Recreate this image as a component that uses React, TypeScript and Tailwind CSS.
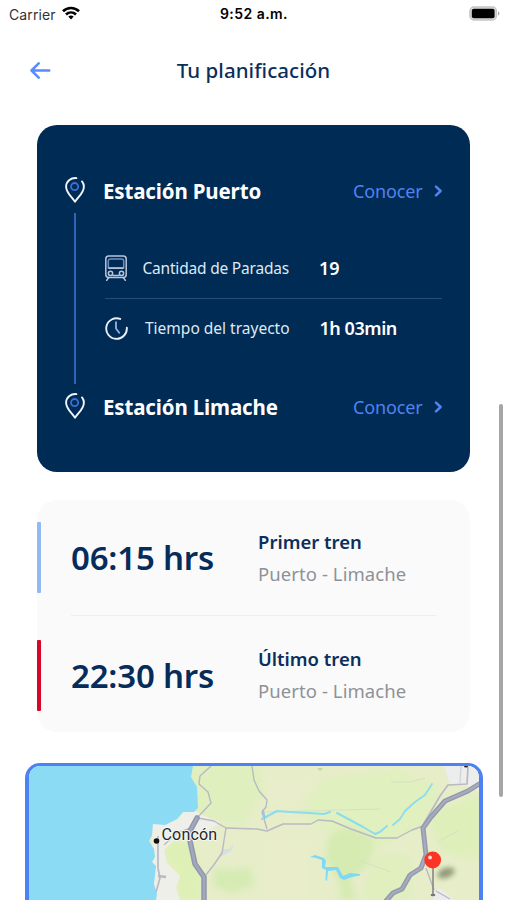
import React from 'react';

interface Departure {
  time: string;
  label: string;
  route: string;
  accent: string;
}

const departures: Departure[] = [
  { time: '06:15 hrs', label: 'Primer tren', route: 'Puerto - Limache', accent: 'bg-[#93b9f5]' },
  { time: '22:30 hrs', label: 'Último tren', route: 'Puerto - Limache', accent: 'bg-[#d9062a]' },
];

const PinIcon: React.FC = () => (
  <svg width="20" height="26" viewBox="0 0 20 26" fill="none" className="mb-[3px] shrink-0">
    <path
      d="M11.400 1.100C5.600.6 1.100 4.500 1.100 9.700c0 5.600 4.400 8.800 8.900 15 4.500-6.200 8.900-9.400 8.900-15 0-2-.6-3.700-1.900-5.300"
      stroke="#f1f5fb"
      strokeWidth="1.900"
      strokeLinecap="round"
      strokeLinejoin="round"
    />
    <circle cx="9.600" cy="9.600" r="3.600" stroke="#3a6fd4" strokeWidth="1.800" />
  </svg>
);

const TrainIcon: React.FC = () => (
  <svg width="22" height="26" viewBox="0 0 22 26" fill="none" stroke="#b9c6da" strokeWidth="1.500" className="-ml-[0.5px] mb-px shrink-0">
    <rect x=".8" y="1" width="20.400" height="21.600" rx="3" />
    <path d="M3.300 12.800V6.200c0-1.400.8-2.200 2.200-2.200h11c1.400 0 2.200.8 2.200 2.200v6.600z" stroke="#6a8fcb" />
    <path d="M3.300 13.200h15.400" />
    <circle cx="5.500" cy="18.400" r="2.100" />
    <circle cx="16.500" cy="18.400" r="2.100" />
    <path d="M8 20.500h6M3.500 22.800l-1.800 2.600M18.500 22.800l1.800 2.600" strokeLinecap="round" />
  </svg>
);

const ClockIcon: React.FC = () => (
  <svg width="23" height="23" viewBox="0 0 23 23" fill="none" strokeLinecap="round" className="-ml-[0.5px] shrink-0">
    <path d="M15.200 1.900A10.300 10.300 0 1 0 21.800 10.700" stroke="#e8eff9" strokeWidth="1.900" />
    <path d="M11 5.200v6.300l3.200 4.300" stroke="#8aabe4" strokeWidth="1.900" strokeLinejoin="round" />
  </svg>
);

const StationRow: React.FC<{ name: string }> = ({ name }) => (
  <div className="flex h-[42px] items-center">
    <PinIcon />
    <h2 className="ml-[18px] flex-1 whitespace-nowrap text-[20.5px] font-bold tracking-[-0.15px]">{name}</h2>
    <button className="-mr-px flex items-center text-[18px] text-[#5282f0]">
      <span className="w-[70px] whitespace-nowrap text-left tracking-[-0.15px]">Conocer</span>
      <svg width="9" height="12" viewBox="0 0 9 12" fill="none" className="ml-[11px]">
        <path d="M2 1.600L6.600 6 2 10.400" stroke="currentColor" strokeWidth="2.500" strokeLinecap="round" strokeLinejoin="round" />
      </svg>
    </button>
  </div>
);

const StatusBar: React.FC = () => (
  <div className="grid h-[28px] grid-cols-3 items-center pl-[9px] pr-[7px] font-['Inter',sans-serif] text-black">
    <div className="flex items-center gap-[6px] text-[14px] text-[#333]">
      <span className="tracking-[0.1px]">Carrier</span>
      <svg width="18" height="14" viewBox="0 0 18 14" fill="none" stroke="#000" strokeWidth="2.700" className="mb-[2px]">
        <path d="M1 5.300C5.600.9 12.400.9 17 5.300" />
        <path d="M4 8.500c2.900-2.700 7.100-2.700 10 0" />
        <path d="M6.300 10.500c1.600-1.300 3.800-1.300 5.400 0L9 13.400z" fill="#000" stroke="none" />
      </svg>
    </div>
    <span className="-mt-px -ml-px whitespace-nowrap text-center text-[14px] font-semibold tracking-[0.45px]">9:52 a.m.</span>
    <div className="flex justify-end">
      <svg width="31" height="15" viewBox="0 0 31 15" className="mb-[2px]">
        <rect x="1" y="1" width="26.400" height="13" rx="4" fill="#ddd" stroke="#c4c4c4" strokeWidth="1.500" />
        <rect x="2.800" y="2.800" width="22.800" height="9.400" rx="2" fill="#000" />
        <path d="M29 5.300c2 .8 2 3.600 0 4.400z" fill="#aaa" />
      </svg>
    </div>
  </div>
);

const RouteMap: React.FC = () => (
  <svg viewBox="29 766 450 134" className="block h-[134px] w-[450px]" fill="none" strokeLinejoin="round">
    <defs>
      <filter id="soft" x="-50%" y="-50%" width="200%" height="200%">
        <feGaussianBlur stdDeviation="3" />
      </filter>
      <filter id="shade" x="-50%" y="-50%" width="200%" height="200%">
        <feGaussianBlur stdDeviation="2.500" />
      </filter>
    </defs>
    <rect x="29" y="766" width="450" height="134" fill="#e6edc8" />

    {/* Vegetation */}
    <g filter="url(#soft)">
      <path d="M190 760H255L265 790 245 815 250 825 195 815z" fill="#dfefbd" />
      <path d="M325 780L400 770 440 790 425 820 375 852 335 835 300 812z" fill="#e0f0be" />
      <path d="M330 834L352 827 374 840 369 864 350 879 357 900H341L340 884 325 858z" fill="#d5ebb2" />
      <path d="M375 855H410V900H362z" fill="#e0efbd" />
      <path d="M430 815L479 795V860L440 850z" fill="#deefb9" />
      <path d="M165 842L190 840 202 875 200 900H180L176 870 166 860z" fill="#def0b5" />
      <path d="M215 869L232 870 250 868 254 885 232 893 213 886z" fill="#d5ebb3" />
      <path d="M263 780H310L300 800 270 805z" fill="#eaedcb" />
      <path d="M264 840H308V900H262z" fill="#e9edca" />
    </g>

    {/* Coastline and urban areas */}
    <path d="M152 824L164 824 178 820 184 812 196 811 204 816 220 822 213 828 191 837 174 840 164 850 167 863 180 876 176 888 180 900H154z" fill="#efefea" />
    <path d="M29 766H193L191 777 197 787 198 808 194 812 183 812 177 819 165 825 153 824 152 835 149 841 154 849 155 857 152 862 156 866 154 884 157 894 156 900H29z" fill="#8bdbf5" />
    <path d="M444 766H479V791L468 786 450 785z" fill="#eceded" />
    <path d="M432 893L439 888 451 897 453 900H433z" fill="#ececec" />
    <path d="M218 858L223 849 229 849 234 843 231 851 226 854z" fill="#d8dfe2" />

    {/* Minor roads */}
    <g stroke="#b9b9c2" strokeWidth="1.400">
      <path d="M211 766L200 776 199 784 208 792 211 803 197 818" />
      <path d="M252 766L254 780 259 791 267 800 266 807 262 812 267 829" />
      <path d="M198 818L214 821 226 828 257 829 267 831 283 824 311 824 318 820 332 821 351 829 376 838H397L412 830 423 826" />
      <path d="M226 828L222 853 213 866 205 876" />
      <path d="M191 828L177 833 164 845" />
      <path d="M423 825L440 796 448 785 467 784 468 767" strokeWidth="1.700" />
      <path d="M461 766L460 783" stroke="#d3d3d8" />
      <path d="M426 868L434 890" />
      <path d="M158 836L158 868 160 878 156 892" strokeWidth="1.700" />
      <path d="M158 876L166 877" strokeWidth="2.500" />
      <path d="M436 891L450 899" />
      <path d="M391 782L410 782 425 778M264 812L380 809M439 841L458 831M361 861L391 872" stroke="#d7dfc5" strokeWidth="1" />
    </g>

    {/* Highway */}
    <g strokeLinecap="round">
      <path d="M197 818L190 831V841L195 864 204 877V902" stroke="#9097ad" strokeWidth="5.500" />
      <path d="M197 818L190 831V841L195 864 204 877V902" stroke="#a3a9bc" strokeWidth="2.500" />
      <path d="M479 784L468 791 445 801 431 817 423 828 426 855 421 868 410 875 402 889 393 893 386 901" stroke="#9299ad" strokeWidth="5" />
      <path d="M479 784L468 791 445 801 431 817 423 828 426 855 421 868 410 875 402 889 393 893 386 901" stroke="#a6abbd" strokeWidth="2.300" />
    </g>

    {/* Rivers and reservoir */}
    <g stroke="#8bdcee" strokeWidth="2" strokeLinecap="round">
      <path d="M262 819L277 811 290 812 309 813 324 814 330 812" />
      <path d="M337 813L352 821 363 827 375 834 380 832 387 826" />
      <path d="M393 825L400 819 405 811 415 802 425 795 432 784" strokeWidth="1.700" />
      <path d="M263 810L265 818" stroke="#8acbe8" strokeWidth="1.500" />
    </g>
    <path
      d="M310 857L315 855 324 858 326 861 325 867 338 867 343 876 350 873 360 874 360 875.500 352 877 344 880 340 878 336 870 328 871 327 881 325.500 880 326 870 322 868 322 860 316 858z"
      fill="#7fd9f2"
    />
    <path d="M317 768l6 0-3 3z" fill="#bad99d" />
    <ellipse cx="466" cy="766" rx="2" ry="1.500" fill="#222" />

    <circle cx="156.500" cy="841" r="2.800" fill="#111" />
    <text
      x="161.500"
      y="839.500"
      fill="#24272b"
      stroke="#f5f7f3"
      strokeWidth="2"
      paintOrder="stroke"
      className="font-['Roboto',sans-serif] text-[16px] tracking-[0.2px]"
    >
      Concón
    </text>

    {/* Destination pin */}
    <ellipse cx="446" cy="873" rx="9" ry="5" fill="#77805f" opacity=".75" filter="url(#shade)" transform="rotate(-20 446 873)" />
    <ellipse cx="433" cy="895" rx="2.400" ry="1.200" fill="#777" />
    <path d="M433 865V894" stroke="#8c8c8c" strokeWidth="1.700" />
    <circle cx="432.700" cy="860" r="8.400" fill="#fb3526" />
    <circle cx="430" cy="857.500" r="1.900" fill="#ffd9d5" />
  </svg>
);

const App: React.FC = () => {
  return (
    <div className="relative h-[900px] w-[507px] overflow-hidden bg-white font-['Noto_Sans',sans-serif]">
      <StatusBar />

      <header className="grid h-[97px] grid-cols-[100px_1fr_100px] items-center pb-[13px] text-[#0b2f5c]">
        <button className="pl-[30px] text-[#5a8cf7]">
          <svg width="21" height="17" viewBox="0 0 21 17" fill="none" stroke="currentColor" strokeWidth="2.500" strokeLinecap="round" strokeLinejoin="round">
            <path d="M19.300 8.500H1.500M8.700 1.300L1.500 8.500l7.200 7.200" />
          </svg>
        </button>
        <h1 className="whitespace-nowrap text-center text-[20.5px] font-medium tracking-[0.05px]">Tu planificación</h1>
      </header>

      {/* Trip summary */}
      <section className="ml-[37px] h-[347px] w-[433px] rounded-[20px] bg-[#002b54] pl-[28px] pr-[28px] pt-[45px] text-white">
        <StationRow name="Estación Puerto" />
        <div className="flex h-[174px]">
          <div className="ml-[9px] mt-px h-[171px] w-[2px] bg-[#3163b8]" />
          <div className="ml-[29px] w-[337px] pt-[27px]">
            <div className="flex h-[60px] items-center border-b border-[#2a4c72] text-[15.5px]">
              <TrainIcon />
              <span className="ml-[16px] mt-px w-[176.5px] whitespace-nowrap tracking-[-0.2px] text-[#dfe8f4]">Cantidad de Paradas</span>
              <span className="text-[18px] font-semibold">19</span>
            </div>
            <div className="flex h-[58px] items-center text-[15.5px]">
              <ClockIcon />
              <span className="ml-[17.5px] mt-[2px] w-[174.5px] whitespace-nowrap text-[#dfe8f4]">Tiempo del trayecto</span>
              <span className="whitespace-nowrap text-[18px] font-semibold tracking-[-0.45px]">1h 03min</span>
            </div>
          </div>
        </div>
        <StationRow name="Estación Limache" />
      </section>

      {/* First and last trains */}
      <section className="ml-[37px] mt-[28px] h-[232px] w-[433px] rounded-[20px] bg-[#fafafa]">
        {departures.map((departure, index) => (
          <div key={departure.label}>
            {index > 0 && <div className="ml-[34px] h-px w-[365px] bg-[#eeeeee]" />}
            <div className={index === 0 ? 'flex h-[115px] items-center' : 'flex h-[118px] items-center'}>
              <div className={`h-[71px] w-[4px] rounded-[1px] ${departure.accent}`} />
              <p className="ml-[30px] w-[187px] whitespace-nowrap text-[33px] font-semibold leading-none tracking-[-0.2px] text-[#052c5a]">{departure.time}</p>
              <div className="whitespace-nowrap text-[18.5px] leading-[32px]">
                <p className="font-semibold text-[#0b2f5c]">{departure.label}</p>
                <p className="tracking-[0.08px] text-[#8e9298]">{departure.route}</p>
              </div>
            </div>
          </div>
        ))}
      </section>

      <section className="ml-[25px] mt-[31px] h-[200px] w-[458px] overflow-hidden rounded-t-[15px] border-x-4 border-t-[3px] border-[#4d82f5]">
        <RouteMap />
      </section>

      <div className="absolute left-[499px] top-[404px] h-[393px] w-[4px] rounded-full bg-[#a6a6a6]" />
    </div>
  );
};

export default App;
